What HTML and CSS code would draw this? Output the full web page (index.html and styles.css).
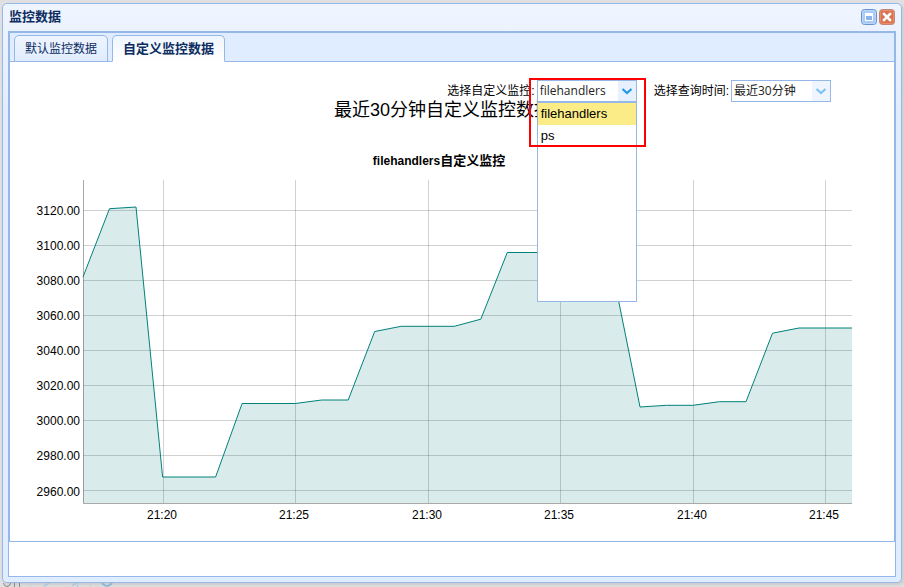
FILE: index.html
```html
<!DOCTYPE html>
<html lang="zh-CN">
<head>
<meta charset="utf-8">
<title>监控数据</title>
<link rel="stylesheet" href="styles.css">
</head>
<body>
<section class="window" aria-labelledby="window-title">
  <header class="window-header">
    <h1 class="window-title" id="window-title">监控数据</h1>
    <div class="window-tools">
      <button class="tool" type="button" aria-label="最大化">
        <svg width="16" height="16" viewBox="0 0 16 16"><rect x=".5" y=".5" width="15" height="15" rx="3" fill="#a9cbf6" stroke="#6a93c9"/><rect x="1.5" y="1.5" width="13" height="13" rx="2" fill="none" stroke="#b9d5fa"/><rect x="4.5" y="4.5" width="7" height="7" fill="#8ab4ee" stroke="#fff"/><path d="M4 5.500h8M4 6.500h8" stroke="#fff"/></svg>
      </button>
      <button class="tool" type="button" aria-label="关闭">
        <svg width="16" height="16" viewBox="0 0 16 16"><rect x=".5" y=".5" width="15" height="15" rx="3" fill="#dc7350" stroke="#c08573"/><rect x="1.500" y="1.500" width="13" height="13" rx="2" fill="none" stroke="#e58e6c"/><path d="M5 5l6 6M11 5l-6 6" stroke="#fff" stroke-width="2.500" stroke-linecap="square"/></svg>
      </button>
    </div>
  </header>
  <main class="window-body">
    <div class="tabs">
      <div class="tab-list" role="tablist">
        <button class="tab" type="button" role="tab" aria-selected="false">默认监控数据</button>
        <button class="tab tab-selected" type="button" role="tab" aria-selected="true">自定义监控数据</button>
      </div>
      <div class="tab-panel" role="tabpanel">
        <form class="filters">
          <label for="monitor">选择自定义监控:</label>
          <div class="combo combo-open">
            <input class="combo-text" id="monitor" type="text" value="filehandlers" role="combobox" aria-expanded="true" aria-controls="monitor-list">
            <button class="combo-arrow" type="button" aria-label="展开"><svg width="18" height="20" viewBox="0 0 18 20"><path d="M4.500 8l4.500 4 4.500-4" fill="none" stroke="#1f97e6" stroke-width="2.200"/></svg></button>
            <ul class="combo-list" id="monitor-list" role="listbox">
              <li class="option option-selected" role="option" aria-selected="true">filehandlers</li>
              <li class="option" role="option" aria-selected="false">ps</li>
            </ul>
            <div class="highlight"></div>
          </div>
          <label for="period">选择查询时间:</label>
          <div class="combo">
            <select class="combo-text" id="period"><option>最近30分钟</option></select>
            <span class="combo-arrow combo-arrow-idle"><svg width="18" height="20" viewBox="0 0 18 20"><path d="M4.500 8l4.500 4 4.500-4" fill="none" stroke="#7cc3f2" stroke-width="2.200"/></svg></span>
          </div>
        </form>
        <h2 class="chart-heading">最近30分钟自定义监控数据图</h2>
        <svg class="chart" viewBox="0 0 884 408" role="img" aria-label="filehandlers自定义监控">
          <text class="chart-title" x="429" y="37">filehandlers<tspan class="chart-title-cjk">自定义监控</tspan></text>
          <g class="grid">
            <path d="M73 82.500h769M73 117.500h769M73 152.500h769M73 187.500h769M73 222.500h769M73 257.500h769M73 292.500h769M73 327.500h769M73 362.500h769"/>
            <path d="M153.500 52v323M285.500 52v323M418.500 52v323M550.500 52v323M683.500 52v323M815.500 52v323"/>
          </g>
          <path class="area" d="M73 149L99.500 80.700 126 79 152.600 349H205.600L232.100 275.500H285.200L311.700 272H338.200L364.700 203.500 391.200 198.300H444.300L470.800 191.200 497.300 124.500H576.800L603.400 147 630 279 656.500 277.300H683L709.500 273.700H736L762.500 205.200 789 200H842V375H73Z"/>
          <path class="line" d="M73 149L99.500 80.700 126 79 152.600 349H205.600L232.100 275.500H285.200L311.700 272H338.200L364.700 203.500 391.200 198.300H444.300L470.800 191.200 497.300 124.500H576.800L603.400 147 630 279 656.500 277.300H683L709.500 273.700H736L762.500 205.200 789 200H842"/>
          <path class="axis" d="M73.500 52V375.500H842"/>
          <g class="y-labels">
            <text x="70" y="87">3120.00</text><text x="70" y="122">3100.00</text><text x="70" y="157">3080.00</text>
            <text x="70" y="192">3060.00</text><text x="70" y="227">3040.00</text><text x="70" y="262">3020.00</text>
            <text x="70" y="297">3000.00</text><text x="70" y="332">2980.00</text><text x="70" y="368">2960.00</text>
          </g>
          <g class="x-labels">
            <text x="152" y="391">21:20</text><text x="284" y="391">21:25</text><text x="417" y="391">21:30</text>
            <text x="549" y="391">21:35</text><text x="682" y="391">21:40</text><text x="814" y="391">21:45</text>
          </g>
        </svg>
      </div>
    </div>
  </main>
</section>
<footer class="page-edge" aria-hidden="true">
  <svg width="130" height="4" viewBox="0 0 130 4" fill="none">
    <path d="M3.500 0Q4 3.500 7 3.500T10.500 0M14.500 0v4M19.500 0v4" stroke="#888"/>
    <path d="M30.500 0v4M90.500 0v4" stroke="#cfcfd2"/>
    <path d="M44 4V2l4-2h3zM71 4l3-4h4v4h-1V1z" fill="#a9c9dc"/>
    <path d="M102 0q5 6 10 0" stroke="#8db9d2" stroke-width="2"/>
  </svg>
</footer>
</body>
</html>
```
FILE: styles.css
```css
* {
  box-sizing: border-box;
}

body {
  min-height: 100vh;
  margin: 0;
  padding-top: 3px;
  background: #e0e0e3;
  color: #000;
  font: 12px/16px "Liberation Sans", "Noto Sans CJK SC", sans-serif;
}

button,
input,
select {
  margin: 0;
  padding: 0;
  border: 0;
  background: none;
  color: inherit;
  font: inherit;
}

svg {
  display: block;
}

.window {
  display: flex;
  flex-direction: column;
  min-height: calc(100vh - 7px);
  margin: 0 2px;
  padding: 5px;
  border: 1px solid #95b8e7;
  border-radius: 5px;
  background: linear-gradient(to bottom, #eff5ff 0, #e0ecff 20%);
  box-shadow: 2px 2px 3px #ccc;
}

.window-header {
  display: flex;
  align-items: center;
  justify-content: space-between;
  height: 22px;
  padding: 0 1px 6px;
}

.window-title {
  margin: 0;
  color: #0e2d5f;
  font-size: 13px;
  font-weight: bold;
}

.window-tools {
  display: flex;
  gap: 2px;
}

.window-body {
  flex: 1;
  border: 1px solid #95b8e7;
  background: #fff;
}

.tabs {
  border: 1px solid #95b8e7;
}

.tab-list {
  display: flex;
  gap: 4px;
  height: 29px;
  padding: 2px 4px 0;
  border-bottom: 1px solid #95b8e7;
  background: #e0ecff;
}

.tab {
  height: 27px;
  padding: 0 10px;
  border: 1px solid #95b8e7;
  border-radius: 5px 5px 0 0;
  background: linear-gradient(to bottom, #eff5ff, #e0ecff);
  color: #0e2d5f;
}

.tab-selected {
  border-bottom-color: #fff;
  background: linear-gradient(to bottom, #eff5ff, #fff);
  font-size: 13px;
  font-weight: bold;
}

.tab-panel {
  padding: 18px 0 5px;
}

.filters {
  display: flex;
  align-items: center;
  justify-content: flex-end;
  gap: 2px;
  padding-right: 63px;
}

.combo {
  position: relative;
  display: flex;
  width: 100px;
  height: 22px;
  border: 1px solid #95b8e7;
  background: #fff;
}

.combo-open {
  margin-right: 15px;
}

.combo-text {
  flex: 1;
  min-width: 0;
  padding: 0 2px;
  outline: 0;
  appearance: none;
  color: #222;
  font-family: "Open Sans", "Noto Sans CJK SC", sans-serif;
}

.combo-arrow {
  width: 18px;
  background: #e6f0ff;
}

.combo-arrow-idle {
  background: #eff5ff;
  pointer-events: none;
}

.combo-list {
  position: absolute;
  top: 21px;
  left: -1px;
  z-index: 1;
  width: 100px;
  height: 200px;
  margin: 0;
  padding: 0;
  border: 1px solid #95b8e7;
  background: #fff;
  list-style: none;
}

.option {
  padding: 3px;
  font-size: 13px;
}

.option-selected {
  background: #fbec88;
}

.highlight {
  position: absolute;
  top: -3px;
  left: -9px;
  z-index: 2;
  width: 117px;
  height: 69px;
  border: 2px solid #f00;
  pointer-events: none;
}

.chart-heading {
  margin: 0;
  font-size: 18px;
  font-weight: normal;
  line-height: 16px;
  text-align: center;
}

.chart {
  width: 100%;
  margin-top: 10px;
}

.chart-title {
  font-weight: bold;
  text-anchor: middle;
}

.chart-title-cjk {
  font-size: 13px;
}

.grid {
  stroke: #545454;
  stroke-opacity: 0.27;
}

.area {
  fill: #008079;
  fill-opacity: 0.15;
}

.line,
.axis {
  fill: none;
}

.line {
  stroke: #00807b;
}

.axis {
  stroke: #545454;
  stroke-opacity: 0.5;
}

.y-labels {
  text-anchor: end;
}

.x-labels {
  text-anchor: middle;
}

.page-edge {
  height: 4px;
  overflow: hidden;
}
```
